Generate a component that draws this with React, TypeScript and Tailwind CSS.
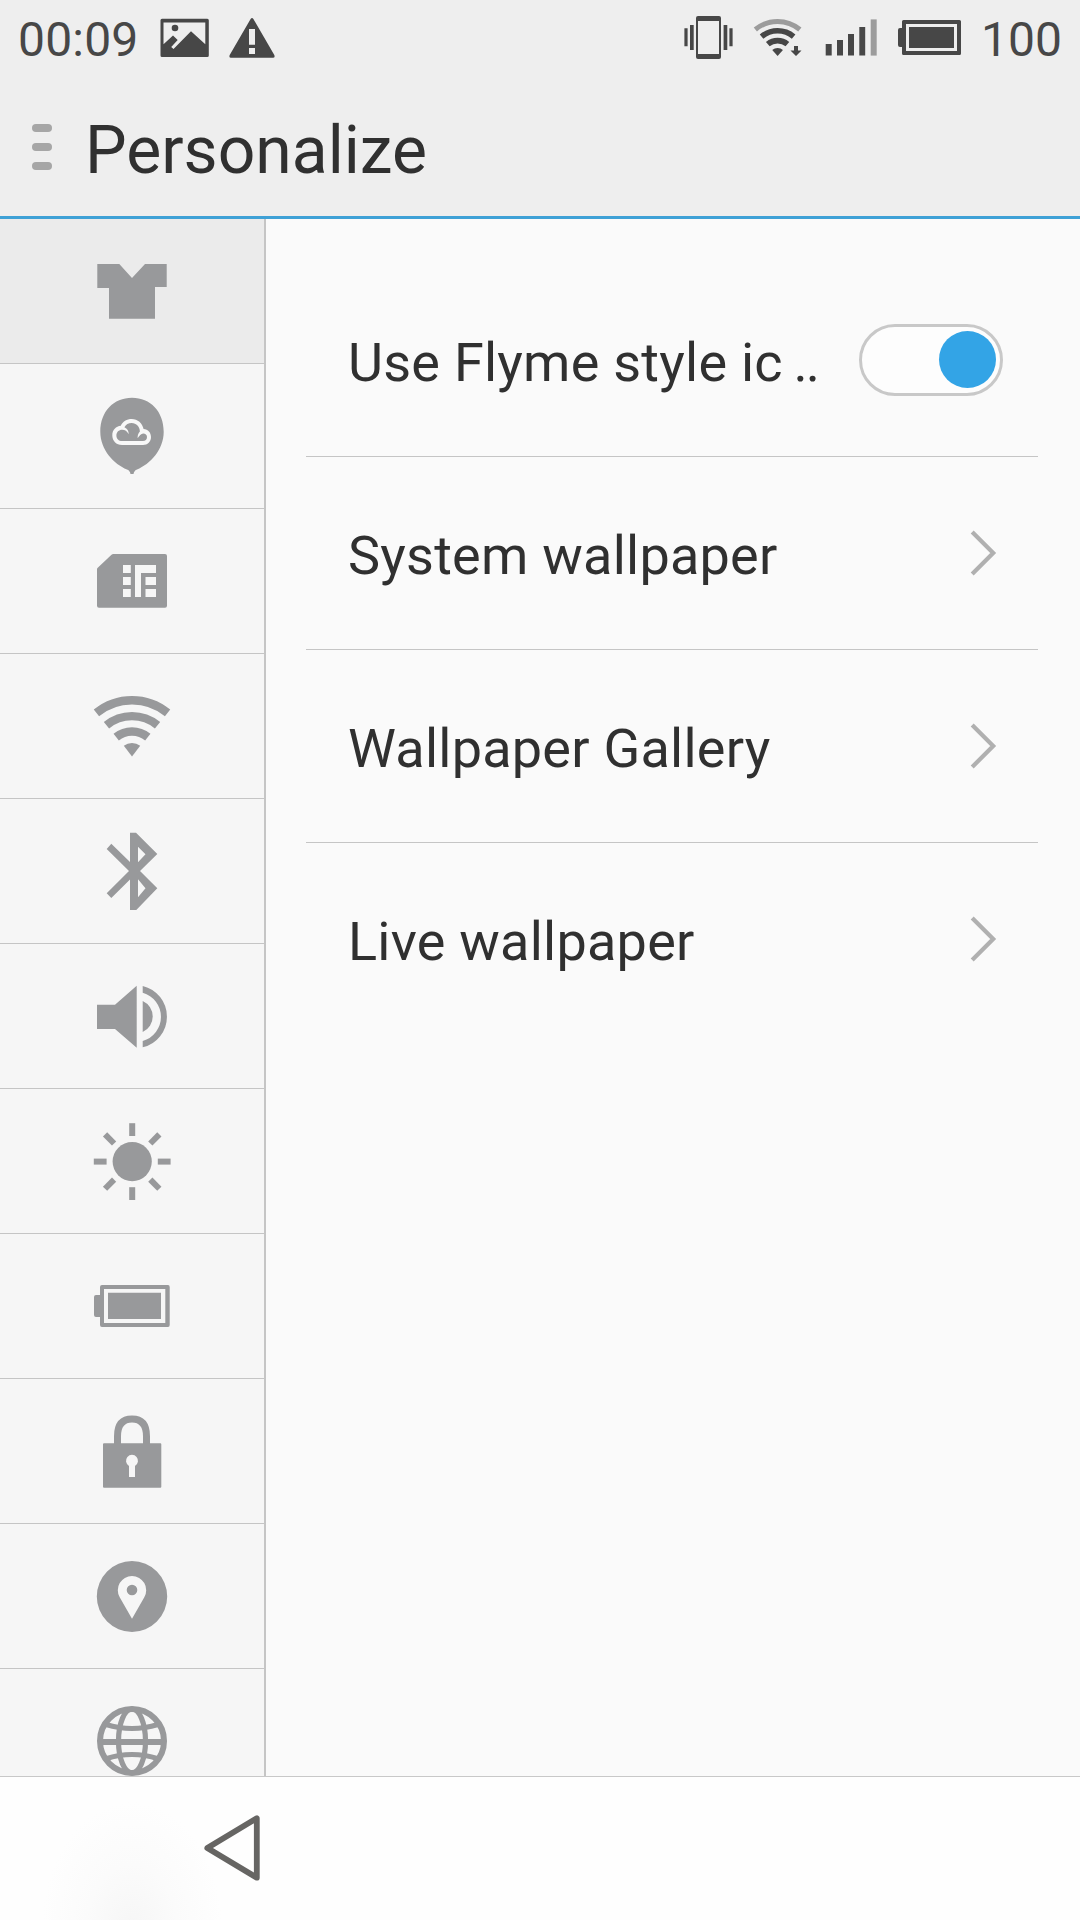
import { useState } from 'react';
import type { ReactNode } from 'react';

const RAY_ANGLES = [0, 45, 90, 135, 180, 225, 270, 315];

// Point pair at radius r around (cx, cy), opened by the given half angle
function fanArc(cx: number, cy: number, r: number, deg: number) {
  const a = (deg * Math.PI) / 180;
  const dx = r * Math.sin(a);
  const dy = r * Math.cos(a);
  return `M${cx - dx} ${cy - dy}A${r} ${r} 0 0 1 ${cx + dx} ${cy - dy}`;
}

function ShirtIcon() {
  return <path d="M97.3 45H119.3L132 59L145 45H166.7V68H155V99.7H109V69H97.3Z" />;
}

function CloudIcon() {
  return (
    <>
      <path d="M132 33.7C150.5 33.7 163.7 47.5 163.7 67.7C163.7 86 150 100 137 105.5C134.5 106.5 134 108 133.5 110H130.5C130 108 129.5 106.5 127 105.5C114 100 100.3 86 100.3 67.7C100.3 47.5 113.5 33.7 132 33.7Z" />
      <path
        fill="#f8f8f8"
        fillRule="evenodd"
        d="M120.8 61.8C122.6 57.5 126.8 55 131.7 55C137.8 55 142.3 59.2 143.6 65C148 65.3 151 68.6 151 73C151 77.6 147.6 81 143 81H122C116.3 81 112.3 77 112.3 71.3C112.3 66 116 62.2 120.8 61.8ZM124.4 63.2C127.3 64.5 128.8 67 128.7 70.2C127 67.2 125 65.8 122.2 65.8C118.8 65.8 116.4 68.2 116.4 71.4C116.4 74.8 118.8 77 122 77H143C145.4 77 147 75.4 147 73C147 70.8 145.4 69.4 143.2 69.4C141 69.6 139.4 71.4 137.6 74.2C137.6 71.2 138.4 69 139.9 67.6C139.9 62.6 136.4 59 131.7 59C128.4 59 125.8 60.6 124.4 63.2Z"
      />
    </>
  );
}

function SimIcon() {
  return (
    <path
      fillRule="evenodd"
      d="M113.3 45H165Q167 45 167 47V96.7Q167 98.7 165 98.7H99Q97 98.7 97 96.7V60.3Q97 59.3 98 58.5L111.5 45.7Q112.3 45 113.3 45ZM123 56V64H130.8V56ZM123 68V76H130.8V68ZM123 80V88H130.8V80ZM135 56V88H141V64H156V56ZM145.5 68V76H156V68ZM145.5 80V88H156V80Z"
    />
  );
}

function WifiIcon() {
  return (
    <>
      <g fill="none" stroke="currentColor" strokeWidth="8.4">
        <path d={fanArc(132, 102.5, 56.3, 39.2)} />
        <path d={fanArc(132, 102.5, 40.4, 39.2)} />
        <path d={fanArc(132, 102.5, 25, 39.2)} />
      </g>
      <path d={`${fanArc(132, 102.5, 13.6, 37)}L132 102.5Z`} />
    </>
  );
}

function BluetoothIcon() {
  return (
    <path
      fillRule="evenodd"
      d="M130 33.7H136L157.3 55L140 72L157.3 89.3L136.3 111H130V80.5L111.3 99L106.7 94.3L129 72L106.7 50L111.3 44.7L130 63ZM138 47.7L145.5 55.3L138 63.3ZM138 80.3L145.5 89.3L138 98.3Z"
    />
  );
}

function SoundIcon() {
  return (
    <path d="M97 60.8H115L136.7 41.7V103.7L115 85H97ZM142.7 57A17 17 0 0 1 142.7 88ZM142.7 42A31.5 31.5 0 0 1 142.7 103.3V97A25.1 25.1 0 0 0 142.7 48.7Z" />
  );
}

function BrightnessIcon() {
  return (
    <>
      <circle cx="132.2" cy="72.6" r="19.6" />
      {RAY_ANGLES.map((angle) => (
        <rect key={angle} x="129.2" y="34.2" width="6" height="12.8" transform={`rotate(${angle} 132.2 72.6)`} />
      ))}
    </>
  );
}

function PowerIcon() {
  return (
    <path
      fillRule="evenodd"
      d="M102 51H168Q169.7 51 169.7 53V91Q169.7 93 168 93H102Q100 93 100 91V83H96Q94 83 94 81V63Q94 61 96 61H100V53Q100 51 102 51ZM104 55V89H165.3V55ZM108 58.7H161V85H108Z"
    />
  );
}

function LockIcon() {
  return (
    <>
      <path d="M117.5 65V57.2Q117.5 40 132 40Q146.5 40 146.5 57.2V65" fill="none" stroke="currentColor" strokeWidth="7" />
      <path
        fillRule="evenodd"
        d="M104 64.3H160.3Q161.3 64.3 161.3 65.3V107.7Q161.3 108.7 160.3 108.7H104Q103 108.7 103 107.7V65.3Q103 64.3 104 64.3ZM129 98H135V87A6 6 0 1 0 129 87Z"
      />
    </>
  );
}

function LocationIcon() {
  return (
    <path
      fillRule="evenodd"
      d="M132 37.1A35.2 35.4 0 1 1 132 107.9A35.2 35.4 0 1 1 132 37.1ZM132 94.7L144.3 73.3A14.2 14.2 0 1 0 119.7 73.3ZM132 60.7A5.3 5.3 0 1 1 132 71.3A5.3 5.3 0 1 1 132 60.7Z"
    />
  );
}

function GlobeIcon() {
  return (
    <g fill="none" stroke="currentColor" strokeWidth="5.2">
      <circle cx="132" cy="72" r="32" strokeWidth="6" />
      <ellipse cx="132" cy="72" rx="13.5" ry="32" />
      <path d="M99 73H165" strokeWidth="6" />
      <path d="M106 55.5Q132 63.5 158 55.5M106 89.8Q132 81.2 158 89.8" />
    </g>
  );
}

const categories: { id: string; icon: ReactNode }[] = [
  { id: 'personalize', icon: <ShirtIcon /> },
  { id: 'account', icon: <CloudIcon /> },
  { id: 'sim', icon: <SimIcon /> },
  { id: 'wifi', icon: <WifiIcon /> },
  { id: 'bluetooth', icon: <BluetoothIcon /> },
  { id: 'sound', icon: <SoundIcon /> },
  { id: 'brightness', icon: <BrightnessIcon /> },
  { id: 'power', icon: <PowerIcon /> },
  { id: 'lock', icon: <LockIcon /> },
  { id: 'location', icon: <LocationIcon /> },
  { id: 'language', icon: <GlobeIcon /> },
];

const links = ['System wallpaper', 'Wallpaper Gallery', 'Live wallpaper'];

function StatusBar() {
  return (
    <div className="flex h-[75px] items-center pr-[18px] pl-[18px] text-[48px] text-[#474747]">
      <span className="w-[142px] pt-1 leading-none tracking-[0.2px]">00:09</span>
      <svg className="h-[75px] w-[49px]" viewBox="160 0 49 75" fill="currentColor">
        <path
          fillRule="evenodd"
          d="M162 18.8H207.3Q208.8 18.8 208.8 20.3V55.5Q208.8 57 207.3 57H162Q160.5 57 160.5 55.5V20.3Q160.5 18.8 162 18.8ZM163.5 22.5V44.3L173 35.6L177.7 40L171.2 47L173.5 49L191 31.3L205.3 44.3V22.5Z"
        />
        <circle cx="175" cy="28" r="3.3" />
      </svg>
      <svg className="ml-5 h-[75px] w-[46px]" viewBox="229 0 46 75" fill="currentColor">
        <path
          fillRule="evenodd"
          d="M250.6 19Q252 17 253.4 19L274.3 55Q275.3 57.7 273 57.7H231Q228.7 57.7 229.7 55ZM249 29V44.7H255V29ZM249 48V54H255V48Z"
        />
      </svg>

      <svg className="ml-auto h-[75px] w-[49px]" viewBox="684 0 49 75" fill="currentColor">
        <path fillRule="evenodd" d="M698 16H719Q721 16 721 18V57Q721 59 719 59H698Q696 59 696 57V18Q696 16 698 16ZM698 21V54H719V21Z" />
        <path d="M690 25H693.7V50H690ZM684.4 28.3H687.6V46.3H684.4ZM723.6 25H727.3V50H723.6ZM729.4 28.3H732.6V46.3H729.4Z" />
      </svg>
      <svg className="ml-5 h-[75px] w-[49px]" viewBox="753 0 49 75" fill="currentColor">
        <g fill="none" stroke="currentColor">
          <path d={fanArc(777.6, 56, 34.6, 40)} stroke="#9c9c9c" strokeWidth="5" />
          <path d={fanArc(777.6, 56, 25.2, 39.5)} strokeWidth="5.6" />
          <path d={fanArc(777.6, 56, 15.4, 39.5)} strokeWidth="5.8" />
        </g>
        <path d={`${fanArc(777.6, 56, 8, 42)}L777.6 56Z`} />
        <path d="M794 46H798V50.5H801.5L796 56L790.5 50.5H794Z" />
      </svg>
      <svg className="ml-[23px] h-[75px] w-[52px]" viewBox="825 0 52 75" fill="currentColor">
        <path d="M825.7 44H831.7V55.6H825.7ZM837 40H843V55.6H837ZM848 34H854V55.6H848ZM859.3 27H865.2V55.6H859.3Z" />
        <path d="M870.7 19.4H876.7V55.6H870.7Z" fill="#9c9c9c" />
      </svg>
      <svg className="ml-5 h-[75px] w-[65px]" viewBox="897 0 65 75" fill="currentColor">
        <path
          fillRule="evenodd"
          d="M903.5 20H959.5Q961 20 961 21.5V53.5Q961 55 959.5 55H903.5Q902 55 902 53.5V47H900Q898 47 898 45V30Q898 28 900 28H902V21.5Q902 20 903.5 20ZM906 24V51H957V24ZM909 27H954V48H909Z"
        />
      </svg>
      <span className="w-[100px] pt-1 text-right leading-none">100</span>
    </div>
  );
}

function Header() {
  return (
    <div className="flex h-[141px] items-center pl-8">
      <button className="flex w-[53px] flex-col gap-[11px] pt-[3px]" aria-label="Menu">
        <span className="h-2 w-5 rounded-full bg-[#a6a6a6]" />
        <span className="h-2 w-5 rounded-full bg-[#a6a6a6]" />
        <span className="h-2 w-5 rounded-full bg-[#a6a6a6]" />
      </button>
      <h1 className="pt-[10px] text-[66px] leading-none text-[#303030]">Personalize</h1>
    </div>
  );
}

function Toggle({ on, onChange }: { on: boolean; onChange: () => void }) {
  return (
    <button
      role="switch"
      aria-checked={on}
      aria-label="Use Flyme style icons"
      onClick={onChange}
      className={`flex h-[72px] w-[144px] items-center rounded-full border-[3px] border-[#c8c8c8] bg-[#fdfdfd] px-1 ${on ? 'justify-end' : 'justify-start'}`}
    >
      <span className={`mb-px size-[57px] rounded-full ${on ? 'bg-[#33a4e6]' : 'bg-[#c8c8c8]'}`} />
    </button>
  );
}

function Chevron() {
  return (
    <svg className="mr-[6px] h-12 w-7" viewBox="0 0 28 48" fill="none" stroke="#b0b0b0" strokeWidth="4.2">
      <path d="M3.2 3L24.2 24L3.2 45" />
    </svg>
  );
}

export default function App() {
  const [active, setActive] = useState('personalize');
  const [flymeIcons, setFlymeIcons] = useState(true);

  return (
    <div className="flex h-[1920px] w-[1080px] flex-col overflow-hidden bg-[#fafafa] font-['Roboto',sans-serif]">
      <header className="shrink-0 border-b-[3px] border-[#3fa1d6] bg-[#eeeeee]">
        <StatusBar />
        <Header />
      </header>

      <div className="flex min-h-0 flex-1">
        {/* Category rail */}
        <nav className="w-[266px] shrink-0 overflow-hidden border-r-2 border-[#c5c5c5]">
          {categories.map(({ id, icon }) => (
            <button
              key={id}
              aria-label={id}
              onClick={() => setActive(id)}
              className={`flex h-[145px] w-full items-center justify-center border-b border-[#c5c5c5] text-[#98999b] ${active === id ? 'bg-[#ebebeb]' : 'bg-[#f6f6f6]'}`}
            >
              <svg className="size-[84px]" viewBox="90 30 84 84" fill="currentColor">
                {icon}
              </svg>
            </button>
          ))}
        </nav>

        {/* Settings list */}
        <main className="flex-1 pt-[45px] pr-[42px] pl-10 text-[54px] tracking-[0.24px] text-[#303030]">
          <div className="flex h-[193px] items-center justify-between border-b border-[#c5c5c5] pr-[35px] pl-[42px]">
            <span className="pt-[5px] leading-none">
              Use Flyme style ic <span className="-ml-[3px] tracking-[-2px]">..</span>
            </span>
            <Toggle on={flymeIcons} onChange={() => setFlymeIcons(!flymeIcons)} />
          </div>
          {links.map((label) => (
            <a
              key={label}
              className="flex h-[193px] items-center justify-between border-b border-[#c5c5c5] pr-[35px] pl-[42px] last:border-transparent"
            >
              <span className="pt-[5px] leading-none">{label}</span>
              <Chevron />
            </a>
          ))}
        </main>
      </div>

      {/* Navigation bar */}
      <footer className="h-36 shrink-0 border-t border-[#c8c8c8] bg-[radial-gradient(ellipse_90px_125px_at_132px_150px,#f6f6f6_0,#fbfbfb_50%,#fefefe_100%)] pt-[35px] pl-[200px]">
        <svg className="h-[72px] w-16" viewBox="200 1812 64 72" fill="none" stroke="#666563" strokeWidth="5.8" strokeLinejoin="round">
          <path d="M207.3 1848L256.8 1818.2V1877.7Z" />
        </svg>
      </footer>
    </div>
  );
}
